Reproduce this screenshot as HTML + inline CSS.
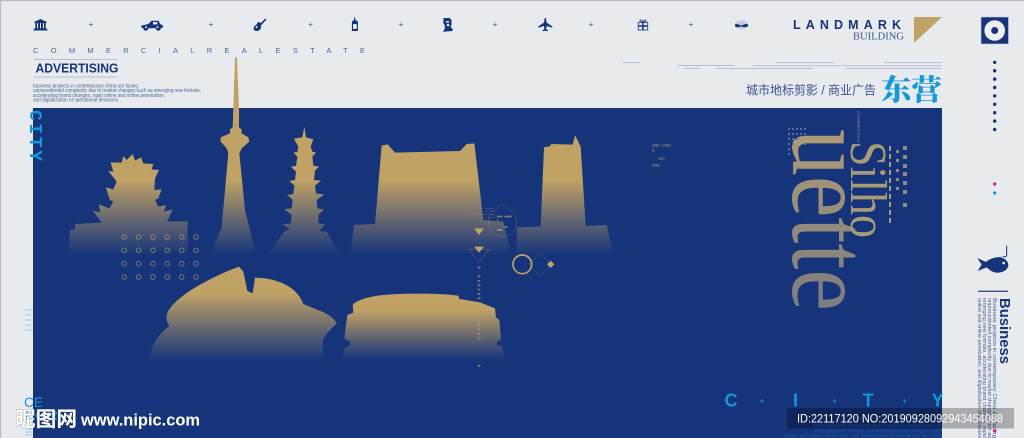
<!DOCTYPE html>
<html>
<head>
<meta charset="utf-8">
<style>
html,body{margin:0;padding:0;width:1024px;height:438px;overflow:hidden;background:#e8ebee}
svg{display:block}
text{font-family:"Liberation Sans","Noto Sans CJK SC",sans-serif}
</style>
</head>
<body>
<svg width="1024" height="438" viewBox="0 0 1024 438" xmlns="http://www.w3.org/2000/svg">
<defs>
<linearGradient id="g4" gradientUnits="userSpaceOnUse" x1="0" y1="390" x2="0" y2="615"><stop offset="0" stop-color="#c0a265"/><stop offset="1" stop-color="#15347a"/></linearGradient>
<linearGradient id="g5" gradientUnits="userSpaceOnUse" x1="0" y1="150" x2="0" y2="375"><stop offset="0" stop-color="#c0a265"/><stop offset="1" stop-color="#15347a"/></linearGradient>
<linearGradient id="g5b" gradientUnits="userSpaceOnUse" x1="0" y1="540" x2="0" y2="690"><stop offset="0" stop-color="#c0a265"/><stop offset="1" stop-color="#15347a"/></linearGradient>
<linearGradient id="g6" gradientUnits="userSpaceOnUse" x1="0" y1="115" x2="0" y2="318"><stop offset="0" stop-color="#c0a265"/><stop offset="1" stop-color="#15347a"/></linearGradient>
<linearGradient id="gt" x1="0" y1="0" x2="1" y2="0"><stop offset="0" stop-color="#ae9c74"/><stop offset="1" stop-color="#7c7c80"/></linearGradient>
</defs>

<rect width="1024" height="438" fill="#e8ebee"/>
<rect width="1024" height="1.2" fill="#b9bdc2"/>
<rect width="1.2" height="438" fill="#b9bdc2"/>
<rect x="33" y="108" width="909" height="330" fill="#15347a"/>

<!-- top icon row -->
<g fill="#15347a">
<path fill-rule="evenodd" d="M33.500 30.500h14v-1.200h-1v-1h-.8v-5.300h.8v-1.200l-6-2.800-6 2.800v1.200h.8v5.300h-.8v1h-1zM37 23h1v5.300H37zM40 23h1v5.300H40zM43 23h1v5.300H43z"/>
<path d="M141.500 25.500l4-.8 3-.8 3-3.200h7l1.800 3.600 2.500.8v2.500l-2 .6a2.500 2.500 0 0 1-5 0h-7.500a2.500 2.500 0 0 1-5 0l-1.500-.4-.8-1.500z"/>
<path d="M265.500 18.500l1 1-1.300 1.400-4.400 4.800c.6 1.400.2 3-.9 4-1.600 1.500-4.200 1.700-5.700.4-1-1.300-.7-3.400.7-4.500.7-.7 1.300-.5 1.900-1.500.5-1.300 1.300-2.300 2.500-2l1.500 1 4.100-4.100z"/>
<path d="M354 17.500h1.200v2.700h1.300l1.400 1.500v9.300h-6v-9.300l1.400-1.500h.7z"/>
<path d="M443.500 18h6l2 2v5l-1 1.500 2.300 3-.3 1.500-9.500.8 1.800-3.300v-3l-1.500-2.500z"/>
<path d="M544.700 18l1.200 0 .7 4.500 5.700 4v1.200l-5.600-1.700-.5 3 1.800 1.400v.8l-2.700-.4-2.700.4v-.8l1.800-1.400-.5-3-5.600 1.700v-1.200l5.700-4z"/>
</g>
<!-- gift -->
<g fill="none" stroke="#2c4886">
<rect x="638.200" y="22.500" width="9.500" height="7.500" stroke-width=".9"/>
<path d="M643 22.500v7.500M638.200 26h9.500" stroke-width="1.500" stroke="#15347a"/>
<path d="M643 22c-1.200-2.600-3.200-2.600-3.200-1.200 0 1 1.500 1.200 3.200 1.200 1.700 0 3.200-.2 3.200-1.200 0-1.400-2-1.400-3.200 1.200z" stroke-width=".8"/>
</g>
<!-- eye -->
<ellipse cx="741.500" cy="24.700" rx="6.800" ry="4.500" fill="#c3cbe0"/>
<path d="M735 24.500c2-1 3-.2 4.500.5 1 .4 2.500.4 3.500 0 1.500-.7 3-1.500 5-.5v1.800c-2 1.300-4 1.200-6 .4-1-.3-1.500-.3-2.500 0-2 .8-3 .9-4.500-.4z" fill="#15347a"/>
<g fill="#e8ebee">
<circle cx="146" cy="27.200" r="1"/><circle cx="157.500" cy="27.200" r="1"/>
<rect x="153" y="22" width="4.300" height="2.400"/>
<circle cx="256.500" cy="27" r="1"/>
<rect x="353" y="24" width="3.800" height="5" rx="1"/>
<rect x="446" y="21" width="3" height="1.500"/><circle cx="448" cy="25" r="1.300"/>
</g>
<path d="M89 24.500h4M91 22.500v4M209 24.500h4M211 22.500v4M308.500 24.500h4M310.500 22.500v4M399 24.500h4M401 22.500v4M493 24.500h4M495 22.500v4M589 24.500h4M591 22.500v4M689 24.500h4M691 22.500v4" stroke="#5a6fa3" stroke-width=".8" fill="none"/>

<!-- left header -->
<text x="33" y="53" font-size="7.500" fill="#4f6497" textLength="332" lengthAdjust="spacing">COMMERCIALREALESTATE</text>
<rect x="33.500" y="59" width="84" height="1" fill="#b7bfd6"/>
<rect x="33.500" y="76.500" width="84" height="1" fill="#b7bfd6"/>
<text x="35.500" y="72.700" font-size="12.500" font-weight="700" fill="#15347a" textLength="83" lengthAdjust="spacingAndGlyphs">ADVERTISING</text>
<g font-size="5" fill="#4a5f96">
<text x="33" y="87.600" textLength="105" lengthAdjust="spacingAndGlyphs">business projects in contemporary china are facing</text>
<text x="33" y="92.200" textLength="168" lengthAdjust="spacingAndGlyphs">unprecedented complexity due to market changes such as  emerging new formats,</text>
<text x="33" y="96.900" textLength="132" lengthAdjust="spacingAndGlyphs">accelerating brand changes, rapid online and online penetration,</text>
<text x="33" y="101.500" textLength="85" lengthAdjust="spacingAndGlyphs">and digitalization of operational decisions</text>
</g>

<!-- top right -->
<text x="793" y="29" font-size="12.500" font-weight="700" fill="#15347a" textLength="112" lengthAdjust="spacing" style="letter-spacing:4px">LANDMARK</text>
<text x="853" y="39.500" font-size="11" fill="#3f5590" style="font-family:'Liberation Serif',serif" textLength="51" lengthAdjust="spacingAndGlyphs">BUILDING</text>
<path d="M914 17h28l-28 26z" fill="#c0a265"/>
<rect x="981" y="17" width="27.500" height="27" fill="#15347a" stroke="#c8cfde" stroke-width=".6"/>
<circle cx="994.700" cy="30.500" r="10.300" fill="#eceef1"/>
<circle cx="994.700" cy="30.500" r="3.500" fill="#15347a"/>
<g fill="#15347a">
<circle cx="994.700" cy="62.300" r="1.700"/><circle cx="994.700" cy="70.700" r="1.700"/><circle cx="994.700" cy="79.100" r="1.700"/><circle cx="994.700" cy="87.500" r="1.700"/><circle cx="994.700" cy="95.900" r="1.700"/><circle cx="994.700" cy="104.300" r="1.700"/><circle cx="994.700" cy="112.700" r="1.700"/><circle cx="994.700" cy="121.100" r="1.700"/><circle cx="994.700" cy="129.500" r="1.700"/>
</g>
<path d="M623 62.500h17M776 62.500h58M884 62.500h58M677 65.500h57M753 65.700h189M684 68.500h16M716 68.500h97M845 68.500h97" stroke="#b7bfd6" stroke-width="1" fill="none"/>
<text x="746" y="94.500" font-size="12.500" fill="#3a5291" textLength="130" lengthAdjust="spacingAndGlyphs">城市地标剪影 / 商业广告</text>
<text x="881" y="100" font-size="29" font-weight="900" fill="#1297db" style="font-family:'Noto Serif CJK SC',serif" textLength="61" lengthAdjust="spacingAndGlyphs">东营</text>

<!-- vertical CITY -->
<text transform="translate(30,110) rotate(90)" font-size="18" font-weight="700" fill="#1297db" style="font-family:'Liberation Mono',monospace" textLength="51" lengthAdjust="spacing">CITY</text>

<!-- landmarks -->
<g transform="translate(60,50) scale(.33333)">
<path fill="url(#g4)" d="M25,615 L30,540 L45,538 L45,522 L125,518 L98,482 L120,487 L117,463 L148,475 L160,455 L150,450 L137,412 L160,418 L170,395 L145,363 L160,365 L152,337 L185,338 L190,318 L200,330 L218,312 L225,332 L243,322 L250,340 L280,342 L275,358 L297,360 L285,385 L283,420 L305,418 L295,445 L285,450 L295,470 L318,465 L312,485 L338,478 L322,514 L383,514 L383,615 Z"/>
<path fill="url(#g4)" d="M525,22 L531,22 L537,175 L537,232 L545,238 L545,250 L565,262 L568,275 L545,295 L538,310 L555,480 L585,600 L590,620 L450,620 L485,530 L505,310 L500,295 L482,275 L482,262 L510,250 L510,238 L518,232 L520,175 Z"/>
<path fill="url(#g4)" d="M733,230 L738,262 L760,268 L752,290 L757,305 L768,308 L757,320 L760,347 L777,350 L765,362 L762,390 L783,392 L765,407 L768,430 L792,434 L770,450 L772,475 L792,478 L775,495 L775,520 L796,522 L778,543 L800,545 L825,590 L850,610 L850,620 L618,620 L640,590 L673,545 L690,538 L666,522 L692,520 L695,495 L673,477 L695,475 L698,450 L682,435 L700,432 L703,407 L688,393 L705,390 L708,365 L692,350 L708,348 L712,320 L700,308 L712,306 L715,290 L702,266 L727,262 Z"/>
</g>
<g transform="translate(340,130) scale(.33333)">
<path fill="url(#g5)" d="M30,378 L42,285 L105,282 L125,47 L143,43 L165,68 L360,63 L380,42 L403,40 L430,270 L490,275 L515,378 Z"/>
<path fill="url(#g5)" d="M530,378 L530,292 L602,290 L612,52 L632,48 L632,42 L698,44 L705,15 L722,50 L737,288 L800,285 L822,378 Z"/>
<path fill="url(#g5b)" d="M5,690 L12,655 L30,645 L30,635 L13,625 L22,555 L40,548 L38,525 C45,512 90,498 130,495 C170,490 300,488 355,497 L358,507 L420,517 L465,535 L468,562 L478,570 L483,628 L472,635 L470,645 L487,650 L492,690 Z"/>
<g fill="#c0a265">
<path d="M402,295H432L417,315ZM402,350H432L417,368Z"/>
<path d="M632,392L643,403L632,414L621,403Z"/>
</g>
<g fill="none" stroke="#c0a265">
<circle cx="547" cy="403" r="28" stroke-width="5"/>
<path d="M385,358H448L417,397Z" stroke-width="1.500" opacity=".6"/>
<path d="M600,370L635,403L600,437L567,403Z" stroke-width="1.500" opacity=".45"/>
<path d="M488,222L519,247A43,43 0 1 1 456,247Z" stroke-width="1.500" opacity=".45"/>
<path d="M435,235H463M435,243H463M385,254H465M435,263H463" stroke-width="1.500" opacity=".5"/>
</g>
<g fill="#c0a265" opacity=".65">
<path d="M411,410h12l-6,7zM411,437h12l-6,7zM411,450h12l-6,7zM411,463h12l-6,7zM411,476h12l-6,7zM411,489h12l-6,7zM411,502h12l-6,7zM411,568h12l-6,7zM411,581h12l-6,7zM411,595h12l-6,7zM411,609h12l-6,7zM411,622h12l-6,7zM411,705h12l-6,7z"/>
<rect x="471" y="257" width="16" height="5"/><rect x="493" y="257" width="22" height="5"/>
<rect x="471" y="268" width="4" height="5"/><rect x="490" y="289" width="14" height="4"/><rect x="471" y="297" width="16" height="6"/>
</g>
</g>
<g transform="translate(140,255) scale(.33333)">
<path fill="url(#g6)" d="M28,318 C30,285 45,245 88,213 C75,195 78,175 90,160 C115,125 190,75 297,35 L310,50 L322,108 L338,115 L345,68 C400,68 470,90 490,147 C530,165 575,175 590,205 C570,225 548,245 548,265 L552,318 Z"/>
</g>

<!-- ring dots -->
<g fill="none" stroke="#c0a265" stroke-width="1" opacity=".62">
<circle cx="124.300" cy="237" r="2.300"/><circle cx="138.600" cy="237" r="2.300"/><circle cx="153" cy="237" r="2.300"/><circle cx="167.300" cy="237" r="2.300"/><circle cx="181.700" cy="237" r="2.300"/><circle cx="196" cy="237" r="2.300"/>
<circle cx="124.300" cy="250.300" r="2.300"/><circle cx="138.600" cy="250.300" r="2.300"/><circle cx="153" cy="250.300" r="2.300"/><circle cx="167.300" cy="250.300" r="2.300"/><circle cx="181.700" cy="250.300" r="2.300"/><circle cx="196" cy="250.300" r="2.300"/>
<circle cx="124.300" cy="263.700" r="2.300"/><circle cx="138.600" cy="263.700" r="2.300"/><circle cx="153" cy="263.700" r="2.300"/><circle cx="167.300" cy="263.700" r="2.300"/><circle cx="181.700" cy="263.700" r="2.300"/><circle cx="196" cy="263.700" r="2.300"/>
<circle cx="124.300" cy="277" r="2.300"/><circle cx="138.600" cy="277" r="2.300"/><circle cx="153" cy="277" r="2.300"/><circle cx="167.300" cy="277" r="2.300"/><circle cx="181.700" cy="277" r="2.300"/><circle cx="196" cy="277" r="2.300"/>
</g>

<!-- small code -->
<g font-size="4.500" fill="#a69a78">
<text x="652" y="147">000 +000</text>
<text x="652" y="152">0</text>
<text x="657" y="160">-on!</text>
<text x="652" y="167">000</text>
</g>

<!-- Silhouette -->
<text transform="translate(793,129) rotate(90)" font-size="110" fill="url(#gt)" style="font-family:'Liberation Serif',serif" textLength="182" lengthAdjust="spacingAndGlyphs">uette</text>
<text transform="translate(851,141) rotate(90)" font-size="52" fill="#a89b76" style="font-family:'Liberation Serif',serif" textLength="97" lengthAdjust="spacingAndGlyphs">Silho</text>
<text transform="translate(857,111) rotate(90)" font-size="4.500" fill="#7d8298" textLength="32" lengthAdjust="spacingAndGlyphs">COMMERCIAL</text>
<path d="M890 146V223" stroke="#a89b76" stroke-width="2" stroke-dasharray="5 3" fill="none"/>
<g fill="#a59a80" opacity=".85">
<rect x="903" y="146" width="4" height="4"/><rect x="903" y="155" width="4" height="4"/><rect x="903" y="164" width="4" height="4"/><rect x="903" y="172" width="4" height="4"/><rect x="903" y="181" width="4" height="4"/><rect x="903" y="190" width="4" height="4"/><rect x="903" y="203" width="4" height="4"/>
<rect x="896" y="150" width="3" height="3"/><rect x="896" y="159" width="3" height="3"/><rect x="896" y="169" width="3" height="3"/><rect x="896" y="178" width="3" height="3"/><rect x="896" y="187" width="3" height="3"/>
</g>
<g fill="#5e6c94">
<rect x="788" y="128" width="2" height="2"/><rect x="792" y="128" width="2" height="2"/><rect x="796" y="128" width="2" height="2"/><rect x="800" y="128" width="2" height="2"/><rect x="804" y="128" width="2" height="2"/>
<rect x="788" y="133" width="2" height="2"/><rect x="792" y="133" width="2" height="2"/><rect x="796" y="133" width="2" height="2"/><rect x="800" y="133" width="2" height="2"/><rect x="804" y="133" width="2" height="2"/>
<rect x="788" y="138" width="2" height="2"/><rect x="792" y="138" width="2" height="2"/><rect x="796" y="138" width="2" height="2"/><rect x="804" y="143" width="2" height="2"/>
<rect x="788" y="143" width="2" height="2"/><rect x="792" y="143" width="2" height="2"/><rect x="788" y="148" width="2" height="2"/><rect x="788" y="153" width="2" height="2"/>
</g>

<!-- right column -->
<circle cx="994.700" cy="184" r="1.600" fill="#e0157f"/>
<circle cx="994.700" cy="193" r="1.600" fill="#1297db"/>
<g transform="translate(944,170) scale(.33333)">
<path fill="#15347a" d="M100,264 L126,276 C140,264 160,260 172,262 C185,266 193,276 193,285 C193,296 182,306 165,308 C150,309 138,302 128,292 L101,303 L113,284 Z"/>
<circle cx="179" cy="279" r="4" fill="#e8ebee"/>
<path fill="none" stroke="#15347a" stroke-width="3" d="M188,227 V256 Q186,264 176,258"/>
<rect x="102" y="362" width="90" height="3.500" fill="#15347a"/>
</g>
<text transform="translate(1000,298) rotate(90)" font-size="14.500" font-weight="700" fill="#15347a" textLength="66" lengthAdjust="spacingAndGlyphs">Business</text>
<g font-size="5" fill="#4a5f96">
<text transform="translate(993,298) rotate(90)" textLength="140" lengthAdjust="spacingAndGlyphs">Business projects in contemporary China are facing</text>
<text transform="translate(988,298) rotate(90)" textLength="140" lengthAdjust="spacingAndGlyphs">unprecedented complexity due to market changes such as</text>
<text transform="translate(983,298) rotate(90)" textLength="140" lengthAdjust="spacingAndGlyphs">emerging new formats, accelerating brand changes, rapid</text>
<text transform="translate(978,298) rotate(90)" textLength="140" lengthAdjust="spacingAndGlyphs">online and online penetration, and digitalization of decisions</text>
</g>

<!-- bottom CITY -->
<g font-size="18" font-weight="700" fill="#1297db" style="font-family:'Liberation Mono',monospace">
<text x="724.500" y="406.700">C</text><text x="793" y="406.700">I</text><text x="862.600" y="406.700">T</text><text x="931.600" y="406.700">Y</text>
</g>
<path d="M760 401h4M762 399v4M832.500 401h4M834.500 399v4M902.500 401h4M904.500 399v4" stroke="#1297db" stroke-width=".8" fill="none"/>
<g font-size="5" fill="#1c5cab" text-anchor="end">
<text x="942" y="427">unprecedented complexity due to market changes such as</text>
<text x="942" y="432.500">emerging new formats, accelerating brand changes, rapid</text>
<text x="942" y="437.500">online and online penetration, and digitalization of operational decisions</text>
</g>
<circle cx="994.700" cy="431" r="1.600" fill="#e0157f"/>

<!-- left edge bits -->
<text x="24" y="407" font-size="14" fill="#1297db" textLength="19" lengthAdjust="spacingAndGlyphs">CE</text>
<text x="24" y="420" font-size="14" fill="#1297db" textLength="34" lengthAdjust="spacingAndGlyphs">COR</text>
<path d="M25 310h7M25 315h7M25 320h7M25 325h7M25 330h7M25 429h7M25 432h7M25 435h7" stroke="#7fc4ea" stroke-width=".8" fill="none"/>

<!-- watermark left -->
<text x="15" y="426" font-size="20.500" font-weight="700" fill="#ffffff" stroke="#555" stroke-width=".4" paint-order="stroke" textLength="62" lengthAdjust="spacing" style="font-family:'Noto Sans CJK SC',sans-serif">昵图网</text>
<text x="81" y="425.500" font-size="17" font-weight="700" fill="#ffffff" textLength="119" lengthAdjust="spacingAndGlyphs">www.nipic.com</text>

<!-- watermark right -->
<rect x="787" y="408" width="227" height="20.500" fill="#000" opacity=".27"/>
<text x="797" y="422.500" font-size="12" fill="#ffffff" textLength="206" lengthAdjust="spacingAndGlyphs">ID:22117120 NO:20190928092943454088</text>
</svg>
</body>
</html>
